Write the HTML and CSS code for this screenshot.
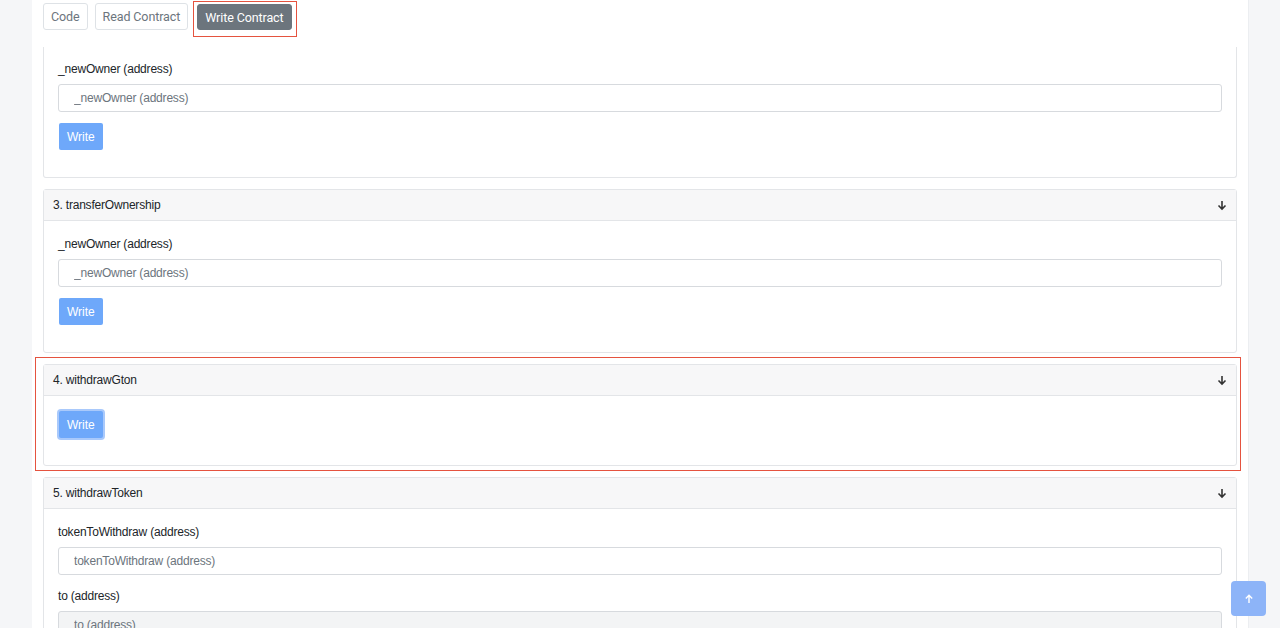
FILE: index.html
```html
<!DOCTYPE html>
<html>
<head>
    <meta charset="UTF-8">
    <meta name="viewport" content="width=device-width, initial-scale=1.0">
    <title>Write Contract</title>
    <link rel="stylesheet" href="styles.css">
</head>
<body>
<div class="panel">
    <div class="tabs">
        <button class="tab">Code</button>
        <button class="tab">Read Contract</button>
        <button class="tab tab-active marked">Write Contract</button>
    </div>

    <div class="cards">
        <!-- card 2 is scrolled, only its body is visible -->
        <div class="card card-cut">
            <div class="card-body">
                <div class="field">
                    <label class="field-label">_newOwner (address)</label>
                    <input class="field-input" type="text" placeholder="_newOwner (address)">
                </div>
                <button class="btn-write">Write</button>
            </div>
        </div>

        <div class="card">
            <div class="card-header">
                <span>3. transferOwnership</span>
                <svg class="arrow" width="10" height="11" viewBox="0 0 10 11"><path d="M5 1v8M1.5 5.5L5 9l3.5-3.5" fill="none" stroke="#333" stroke-width="1.6"/></svg>
            </div>
            <div class="card-body">
                <div class="field">
                    <label class="field-label">_newOwner (address)</label>
                    <input class="field-input" type="text" placeholder="_newOwner (address)">
                </div>
                <button class="btn-write">Write</button>
            </div>
        </div>

        <div class="card marked-card">
            <div class="card-header">
                <span>4. withdrawGton</span>
                <svg class="arrow" width="10" height="11" viewBox="0 0 10 11"><path d="M5 1v8M1.5 5.5L5 9l3.5-3.5" fill="none" stroke="#333" stroke-width="1.6"/></svg>
            </div>
            <div class="card-body">
                <button class="btn-write btn-focus">Write</button>
            </div>
        </div>

        <div class="card">
            <div class="card-header">
                <span>5. withdrawToken</span>
                <svg class="arrow" width="10" height="11" viewBox="0 0 10 11"><path d="M5 1v8M1.5 5.5L5 9l3.5-3.5" fill="none" stroke="#333" stroke-width="1.6"/></svg>
            </div>
            <div class="card-body">
                <div class="field">
                    <label class="field-label">tokenToWithdraw (address)</label>
                    <input class="field-input" type="text" placeholder="tokenToWithdraw (address)">
                </div>
                <div class="field">
                    <label class="field-label">to (address)</label>
                    <input class="field-input field-grey" type="text" placeholder="to (address)">
                </div>
            </div>
        </div>
    </div>
</div>

<button class="to-top">
    <svg width="10" height="10" viewBox="0 0 10 10"><path d="M5 9V1.5M1.8 4.5L5 1.3l3.2 3.2" fill="none" stroke="#fff" stroke-width="1.4"/></svg>
</button>
</body>
</html>
```

FILE: styles.css
```css
html, body {
    margin: 0;
    padding: 0;
    height: 100%;
    overflow: hidden;
    background-color: #f5f6f8;
    font-family: "Liberation Sans", Arial, sans-serif;
    color: #212529;
}

.panel {
    width: 1194px;
    height: 100%;
    margin-left: 32px;
    padding: 0 11px;
    background-color: #fff;
    border-right: 1px solid #eceef1;
}

/* tabs */
.tabs {
    display: flex;
    gap: 7px;
    padding-top: 3px;
    height: 44px;
    box-sizing: border-box;
}

.tab {
    height: 27px;
    padding: 0 7px;
    font-family: Roboto, "Liberation Sans", sans-serif;
    font-size: 12.5px;
    letter-spacing: -0.1px;
    color: #6c757d;
    background-color: #fff;
    border: 1px solid #dee2e6;
    border-radius: 3px;
    position: relative;
}

.tab-active {
    margin-left: 2px;
    margin-top: 1px;
    height: 26px;
    background-color: #6c757d;
    border-color: #6c757d;
    color: #fff;
}

/* red annotation boxes */
.marked::after {
    content: "";
    position: absolute;
    left: -5px;
    right: -6px;
    top: -4px;
    bottom: -8px;
    border: 1px solid #e5533f;
}

.marked-card::after {
    content: "";
    position: absolute;
    left: -9px;
    right: -5px;
    top: -8px;
    bottom: -6px;
    border: 1px solid #e5533f;
}

/* cards */
.cards {
    display: flex;
    flex-direction: column;
    gap: 11px;
}

.card {
    position: relative;
    border: 1px solid #e3e5e8;
    border-radius: 3px;
    background-color: #fff;
}

.card-cut {
    margin-top: 3px;
    border-top: none;
    border-radius: 0 0 3px 3px;
}

.card-cut .card-body {
    padding-top: 14px;
}

.card-header {
    display: flex;
    justify-content: space-between;
    align-items: center;
    height: 30px;
    padding: 0 9px 0 9px;
    background-color: #f7f7f8;
    border-bottom: 1px solid #e3e5e8;
    font-size: 12px;
    letter-spacing: -0.2px;
    color: #212529;
}

.arrow {
    display: block;
}

.card-body {
    padding: 15px 14px 27px 14px;
}

.field {
    margin-bottom: 11px;
}

.field + .field {
    padding-top: 2px;
}

.field-label {
    display: block;
    font-size: 12px;
    letter-spacing: -0.2px;
    line-height: 16px;
    margin-bottom: 7px;
    color: #212529;
}

.field-input {
    display: block;
    width: 100%;
    height: 28px;
    box-sizing: border-box;
    padding: 0 15px;
    font-family: "Liberation Sans", Arial, sans-serif;
    font-size: 12px;
    letter-spacing: -0.2px;
    border: 1px solid #d7dade;
    border-radius: 3px;
    background-color: #fff;
}

.field-input::placeholder {
    color: #6c757d;
}

.field-grey {
    background-color: #f3f4f5;
}

.btn-write {
    display: block;
    height: 27px;
    padding: 0 8px;
    margin-left: 1px;
    font-family: "Liberation Sans", Arial, sans-serif;
    font-size: 12px;
    color: #fff;
    background-color: #6ea8fa;
    border: none;
    border-radius: 2px;
}

.btn-focus {
    box-shadow: 0 0 0 2px #a9c9fb;
}

.to-top {
    position: fixed;
    left: 1231px;
    top: 581px;
    width: 35px;
    height: 35px;
    border: none;
    border-radius: 4px;
    background-color: #8db4f8;
    display: flex;
    align-items: center;
    justify-content: center;
    padding: 0;
}
```
